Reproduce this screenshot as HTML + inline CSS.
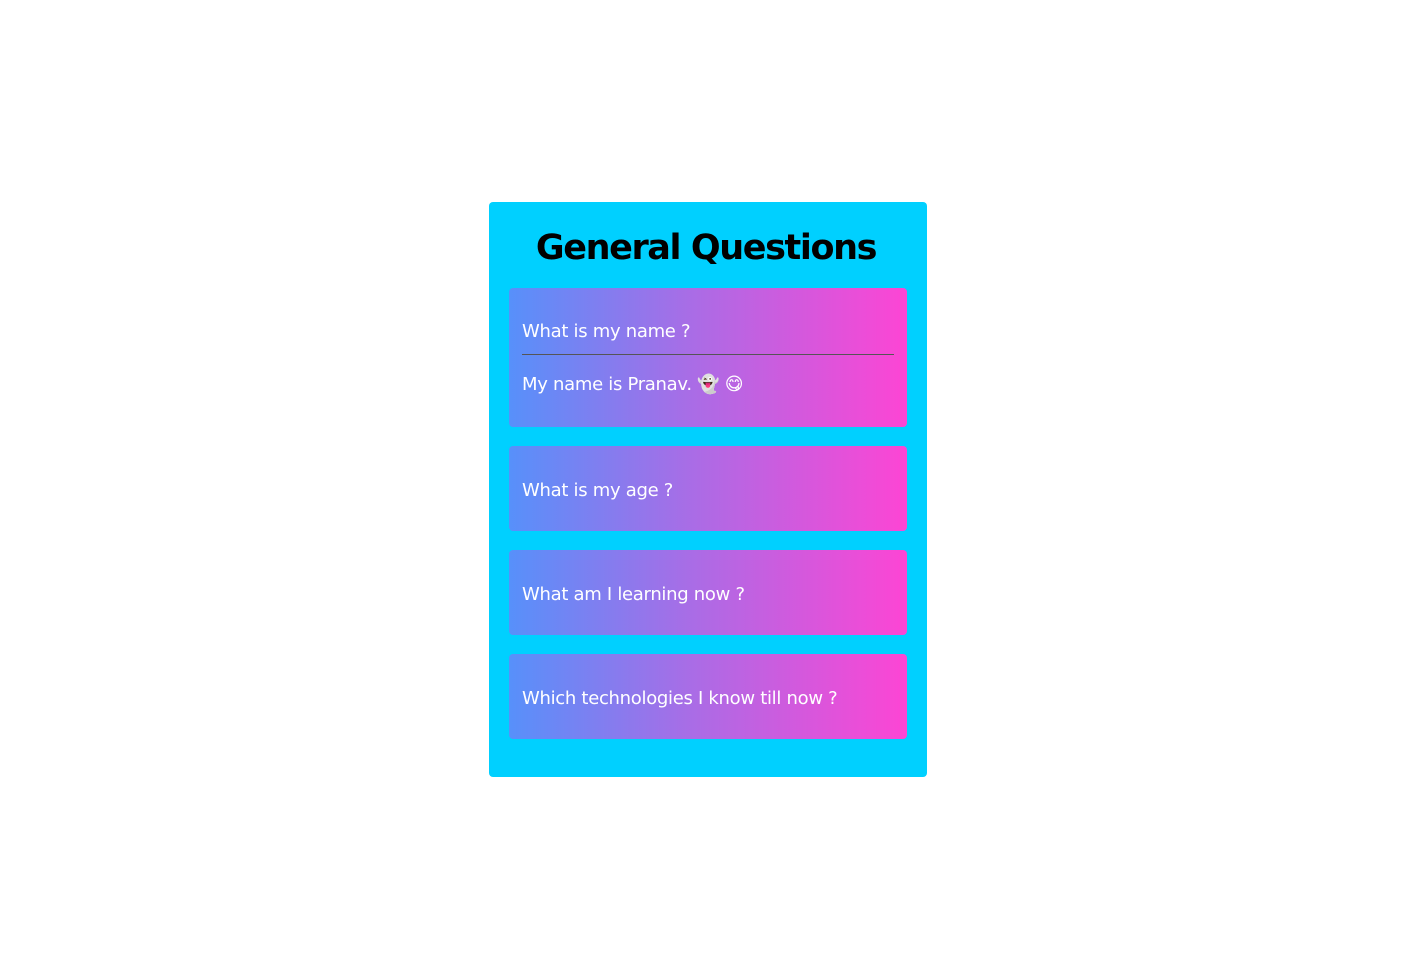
<!DOCTYPE html>
<html><head><style>
body{margin:0;background:#fff;width:1412px;height:960px;position:relative;font-family:"DejaVu Sans","Liberation Sans",sans-serif;}
.box{position:absolute;left:489px;top:202px;width:438px;height:575px;background:#00d0ff;border-radius:4px;}
h1{position:absolute;left:0;right:0;top:224px;margin:0;text-align:center;font-size:35px;font-weight:bold;color:#000;line-height:48px;letter-spacing:-1.4px}
.c{position:absolute;left:509px;width:398px;background:linear-gradient(90deg,#5790fa,#a86de6 45%,#fd45d4);border-radius:4px;color:#fff;font-size:18px;}
.c span{position:absolute;left:13px;white-space:nowrap;letter-spacing:-0.3px}
.hr{position:absolute;left:13px;right:13px;top:66px;height:1px;background:#555;}
</style></head><body>
<div class="box"></div>
<h1>General Questions</h1>
<div class="c" style="top:288px;height:139px"><span style="top:33px">What is my name ?</span><div class="hr"></div><span style="top:86px">My name is Pranav. 👻 😋</span></div>
<div class="c" style="top:446px;height:85px"><span style="top:34px">What is my age ?</span></div>
<div class="c" style="top:550px;height:85px"><span style="top:34px">What am I learning now ?</span></div>
<div class="c" style="top:654px;height:85px"><span style="top:34px">Which technologies I know till now ?</span></div>
</body></html>
